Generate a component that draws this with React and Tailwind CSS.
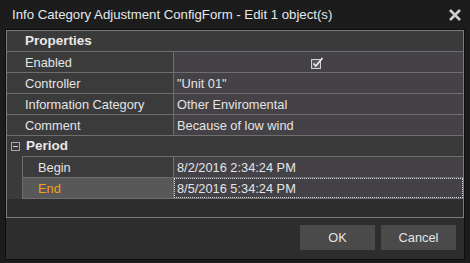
import React from "react";

const font = { fontFamily: '"Liberation Sans", Arial, sans-serif' };

function CheckGlyph() {
  return (
    <svg width="13" height="12" viewBox="0 0 13 12" className="block">
      <rect x="0.5" y="2.5" width="9" height="9" fill="#5a5a5a" stroke="#d4d4d4" />
      <path d="M2.5 6.5 L4.8 9 L11.5 1" fill="none" stroke="#f0f0f0" strokeWidth="1.6" />
    </svg>
  );
}

function Row({ label, value, children }) {
  return (
    <div className="flex h-[21px] border-b border-[#6e6e6e]">
      <div className="flex w-[167px] items-center border-r border-[#6e6e6e] bg-[#3b3b3b] pl-[18px] pt-px text-[#e4e4e4]">
        {label}
      </div>
      <div className="flex flex-1 items-center bg-[#454247] pl-[3px] pt-px text-[#e4e4e4]">
        {children ?? value}
      </div>
    </div>
  );
}

function ChildRow({ label, value, top, selected }) {
  return (
    <div className="flex">
      <div className="w-[15px] bg-[#3a3a3a]" />
      <div
        className={`flex flex-1 border-b border-l border-[#6e6e6e] ${
          top ? "h-[22px] border-t" : "h-[21px]"
        }`}
      >
        <div
          className={`flex w-[151px] items-center border-r border-[#6e6e6e] pl-[15px] pt-px ${
            selected ? "bg-[#585858] text-[#f5a01a]" : "bg-[#3b3b3b] text-[#e4e4e4]"
          }`}
        >
          {label}
        </div>
        {selected ? (
          <div className="flex flex-1 bg-[#454247]">
            <div className="flex flex-1 items-center border border-dotted border-[#d8d8d8] pl-[2px] pt-px text-[#e4e4e4]">
              {value}
            </div>
          </div>
        ) : (
          <div className="flex flex-1 items-center bg-[#454247] pl-[3px] pt-px text-[#e4e4e4]">
            {value}
          </div>
        )}
      </div>
    </div>
  );
}

export default function App() {
  return (
    <div className="h-[263px] w-[470px] overflow-hidden bg-[#1c1c1c] text-[12.8px]" style={font}>
      <div className="flex h-[29px] items-center justify-between pl-[12px] pr-[8px] pt-px">
        <span className="text-[13.2px] text-[#e3e8ee]">
          Info Category Adjustment ConfigForm - Edit 1 object(s)
        </span>
        <svg width="14" height="12" viewBox="0 0 14 12">
          <path d="M2 1 L12 11 M12 1 L2 11" stroke="#cfcfcf" strokeWidth="2.6" />
        </svg>
      </div>

      <div className="ml-[5px] flex h-[231px] w-[460px] flex-col border border-[#0e0e0e] bg-[#2d2d2d]">
        <div className="flex h-[188px] flex-col border border-[#7c7c7c] bg-[#2d2d2d]">
          <div className="flex h-[21px] items-center border-b border-[#6e6e6e] bg-[#3a3a3a] pl-[18px] pt-px font-bold text-[13.5px] text-[#e8e8e8]">
            Properties
          </div>
          <Row label="Enabled">
            <div className="flex flex-1 justify-center pr-[6px]">
              <CheckGlyph />
            </div>
          </Row>
          <Row label="Controller" value={'"Unit 01"'} />
          <Row label="Information Category" value="Other Enviromental" />
          <Row label="Comment" value="Because of low wind" />
          <div className="flex h-[20px] items-center bg-[#3a3a3a]">
            <div className="ml-[4px] mr-[6px] flex h-[9px] w-[9px] items-center justify-center border border-[#a8a8a8]">
              <div className="h-px w-[5px] bg-[#d0d0d0]" />
            </div>
            <span className="pt-px font-bold text-[13.5px] text-[#e8e8e8]">Period</span>
          </div>
          <ChildRow top label="Begin" value="8/2/2016 2:34:24 PM" />
          <ChildRow selected label="End" value="8/5/2016 5:34:24 PM" />
        </div>

        <div className="mt-[7px] flex justify-end gap-[6px] pr-[8px]">
          <button className="h-[25px] w-[75px] bg-[#4a4a4a] text-[12.8px] text-[#e4e4e4]">OK</button>
          <button className="h-[25px] w-[75px] bg-[#4a4a4a] text-[12.8px] text-[#e4e4e4]">Cancel</button>
        </div>
      </div>
    </div>
  );
}
